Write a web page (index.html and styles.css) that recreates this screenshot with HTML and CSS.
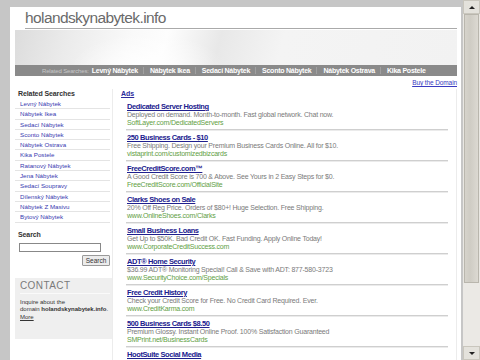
FILE: index.html
```html
<!DOCTYPE html>
<html>
<head>
    <meta charset="utf-8">
    <link rel="stylesheet" href="styles.css">
</head>
<body>
    <div class="screen">
        <div class="window">
            <div class="page">
                <div class="logo">holandskynabytek.info</div>
                <div class="banner"></div>
                <div class="nav">
                    <span class="nav-label">Related Searches:</span>
                    <a href="#">Levný Nábytek</a>
                    <a href="#">Nábytek Ikea</a>
                    <a href="#">Sedací Nábytek</a>
                    <a href="#">Sconto Nábytek</a>
                    <a href="#">Nábytek Ostrava</a>
                    <a href="#">Kika Postele</a>
                </div>
                <div class="buy"><a href="#">Buy the Domain</a></div>
                <div class="columns">
                    <div class="sidebar">
                        <h3>Related Searches</h3>
                        <ul class="links">
                            <li><a href="#">Levný Nábytek</a></li>
                            <li><a href="#">Nábytek Ikea</a></li>
                            <li><a href="#">Sedací Nábytek</a></li>
                            <li><a href="#">Sconto Nábytek</a></li>
                            <li><a href="#">Nábytek Ostrava</a></li>
                            <li><a href="#">Kika Postele</a></li>
                            <li><a href="#">Ratanový Nábytek</a></li>
                            <li><a href="#">Jena Nábytek</a></li>
                            <li><a href="#">Sedací Soupravy</a></li>
                            <li><a href="#">Dílenský Nábytek</a></li>
                            <li><a href="#">Nábytek Z Masivu</a></li>
                            <li><a href="#">Bytový Nábytek</a></li>
                        </ul>
                        <h3 class="search-title">Search</h3>
                        <input class="search-input" type="text">
                        <div class="search-row"><button class="search-btn">Search</button></div>
                        <div class="contact">
                            <div class="contact-title">CONTACT</div>
                            <p>Inquire about the<br>domain <b>holandskynabytek.info</b>.<br><a href="#">More</a></p>
                        </div>
                    </div>
                    <div class="main">
                        <div class="ads-head"><a href="#">Ads</a></div>
                        <div class="ad">
                            <a class="ad-title" href="#">Dedicated Server Hosting</a>
                            <div class="ad-desc">Deployed on demand. Month-to-month. Fast global network. Chat now.</div>
                            <div class="ad-url">SoftLayer.com/DedicatedServers</div>
                        </div>
                        <div class="ad">
                            <a class="ad-title" href="#">250 Business Cards - $10</a>
                            <div class="ad-desc">Free Shipping. Design your Premium Business Cards Online. All for $10.</div>
                            <div class="ad-url">vistaprint.com/customizedbizcards</div>
                        </div>
                        <div class="ad">
                            <a class="ad-title" href="#">FreeCreditScore.com™</a>
                            <div class="ad-desc">A Good Credit Score is 700 &amp; Above. See Yours in 2 Easy Steps for $0.</div>
                            <div class="ad-url">FreeCreditScore.com/OfficialSite</div>
                        </div>
                        <div class="ad">
                            <a class="ad-title" href="#">Clarks Shoes on Sale</a>
                            <div class="ad-desc">20% Off Reg Price. Orders of $80+! Huge Selection. Free Shipping.</div>
                            <div class="ad-url">www.OnlineShoes.com/Clarks</div>
                        </div>
                        <div class="ad">
                            <a class="ad-title" href="#">Small Business Loans</a>
                            <div class="ad-desc">Get Up to $50K. Bad Credit OK. Fast Funding. Apply Online Today!</div>
                            <div class="ad-url">www.CorporateCreditSuccess.com</div>
                        </div>
                        <div class="ad">
                            <a class="ad-title" href="#">ADT® Home Security</a>
                            <div class="ad-desc">$36.99 ADT® Monitoring Special! Call &amp; Save with ADT: 877-580-3723</div>
                            <div class="ad-url">www.SecurityChoice.com/Specials</div>
                        </div>
                        <div class="ad">
                            <a class="ad-title" href="#">Free Credit History</a>
                            <div class="ad-desc">Check your Credit Score for Free. No Credit Card Required. Ever.</div>
                            <div class="ad-url">www.CreditKarma.com</div>
                        </div>
                        <div class="ad">
                            <a class="ad-title" href="#">500 Business Cards $8.50</a>
                            <div class="ad-desc">Premium Glossy. Instant Online Proof. 100% Satisfaction Guaranteed</div>
                            <div class="ad-url">SMPrint.net/BusinessCards</div>
                        </div>
                        <div class="ad">
                            <a class="ad-title" href="#">HootSuite Social Media</a>
                        </div>
                    </div>
                </div>
            </div>
        </div>
        <div class="scrollbar">
            <div class="sb-btn"><span class="arrow-up"></span></div>
            <div class="sb-thumb"></div>
            <div class="sb-track"></div>
            <div class="sb-btn"><span class="arrow-down"></span></div>
        </div>
    </div>
</body>
</html>
```

FILE: styles.css
```css
html, body {
    margin: 0;
    height: 100%;
    overflow: hidden;
}
body {
    font-family: "Liberation Sans", Arial, sans-serif;
    background-color: #c6c6c6;
    color: #555;
}
a {
    color: #2b2b9c;
}
.screen {
    display: flex;
    height: 360px;
}
.window {
    flex: 1;
    padding: 7px 2px 0 10px;
    background-color: #c6c6c6;
    overflow: hidden;
}
.page {
    background-color: #fff;
    height: 100%;
    padding: 0 4px 0 5px;
}
.logo {
    margin-left: 10px;
    height: 21px;
    line-height: 22px;
    font-size: 15.5px;
    letter-spacing: -0.6px;
    color: #6a6a6a;
    border-bottom: 1px solid #aaa;
}
.banner {
    height: 35px;
    margin-top: 1px;
    background:
        radial-gradient(ellipse 110px 50px at 30% 110%, rgba(255,255,255,0.95), rgba(255,255,255,0) 70%),
        linear-gradient(105deg, #dcdcdc 0%, #ebebeb 12%, #f9f9f9 26%, #fdfdfd 34%, #e8e8e8 46%, #f4f4f4 60%, #f2f2f2 100%);
}
.nav {
    display: flex;
    align-items: center;
    height: 11px;
    padding-left: 27px;
    background-color: #8a8a8a;
    white-space: nowrap;
}
.nav-label {
    flex-shrink: 0;
    color: #c8c8c8;
    font-size: 6px;
    letter-spacing: -0.15px;
    margin-right: 3px;
}
.nav a {
    flex-shrink: 0;
    color: #fff;
    font-size: 7px;
    letter-spacing: -0.25px;
    font-weight: bold;
    text-decoration: none;
    padding: 0 5px 0 6px;
    border-left: 1px solid #a0a0a0;
    line-height: 7px;
}
.nav a:first-of-type {
    border-left: none;
    padding-left: 0;
}
.buy {
    text-align: right;
    height: 11px;
    padding-top: 2px;
    line-height: 9px;
    font-size: 6.5px;
    letter-spacing: -0.1px;
}
.buy a {
    color: #3a3ac0;
}
.columns {
    display: flex;
    gap: 5px;
}
.sidebar {
    width: 97px;
    border-right: 1px solid #ececec;
}
.sidebar h3 {
    margin: 0;
    padding-left: 3px;
    font-size: 7px;
    letter-spacing: -0.1px;
    line-height: 10px;
    color: #333;
}
.links {
    list-style: none;
    margin: 0;
    padding: 0;
}
.links li {
    line-height: 9.3px;
    border-bottom: 1px solid #e4e4e4;
    padding-left: 5px;
    font-size: 6.2px;
    margin-right: 2px;
}
.links a {
    text-decoration: none;
    color: #3838b0;
}
.sidebar .search-title {
    margin-top: 7px;
}
.search-input {
    display: block;
    box-sizing: border-box;
    width: 82px;
    height: 9px;
    margin: 3px 0 0 4px;
    padding: 0;
    border: 1px solid #888;
}
.search-row {
    display: flex;
    justify-content: flex-end;
    margin-top: 3px;
    padding-right: 2px;
}
.search-btn {
    font-family: inherit;
    font-size: 6.5px;
    height: 11px;
    width: 28px;
    padding: 0;
    background-color: #ececec;
    border: 1px solid #999;
    border-radius: 1px;
    color: #333;
}
.contact {
    margin-top: 12px;
    background-color: #efefef;
    height: 61px;
    padding: 0 2px 0 5px;
}
.contact-title {
    font-size: 10px;
    letter-spacing: 0.4px;
    line-height: 15px;
    color: #7a7a7a;
    border-bottom: 1px solid #fafafa;
}
.contact p {
    margin: 5px 0 0;
    font-size: 6px;
    line-height: 7.5px;
    color: #333;
    white-space: nowrap;
}
.contact p a {
    color: #333;
}
.main {
    flex: 1;
    border-right: 1px solid #ececec;
}
.ads-head {
    height: 11px;
    line-height: 10px;
    padding-left: 3px;
    font-size: 7px;
    font-weight: bold;
}
.ads-head a {
    color: #2b2b9c;
}
.ad {
    margin: 0 8px 1px 8px;
    padding: 3px 0 2px 1px;
    border-bottom: 1px solid #cfcfcf;
    box-shadow: 0 1px 0 #ebebeb;
    font-size: 7px;
    letter-spacing: -0.2px;
    line-height: 8px;
}
.ad-title {
    display: block;
    font-weight: bold;
    font-size: 7.5px;
    letter-spacing: -0.4px;
    color: #20208e;
}
.ad-desc {
    color: #7a7a7a;
    white-space: nowrap;
}
.ad-url {
    color: #62a044;
}
.scrollbar {
    width: 17px;
    display: flex;
    flex-direction: column;
    background-color: #e9e7e2;
}
.sb-btn {
    height: 14px;
    box-sizing: border-box;
    display: flex;
    align-items: center;
    justify-content: center;
    background-color: #e4e2dc;
    border: 1px solid #c9c6bd;
}
.arrow-up {
    border-left: 3px solid transparent;
    border-right: 3px solid transparent;
    border-bottom: 3px solid #222;
}
.arrow-down {
    border-left: 3px solid transparent;
    border-right: 3px solid transparent;
    border-top: 3px solid #222;
}
.sb-thumb {
    height: 269px;
    box-sizing: border-box;
    margin: 0 1px;
    background: linear-gradient(to right, #d6d3cb, #cfccc4 40%, #dcd9d2);
    border: 1px solid #b9b6ad;
}
.sb-track {
    flex: 1;
    background-color: #ebe9e5;
}
```
